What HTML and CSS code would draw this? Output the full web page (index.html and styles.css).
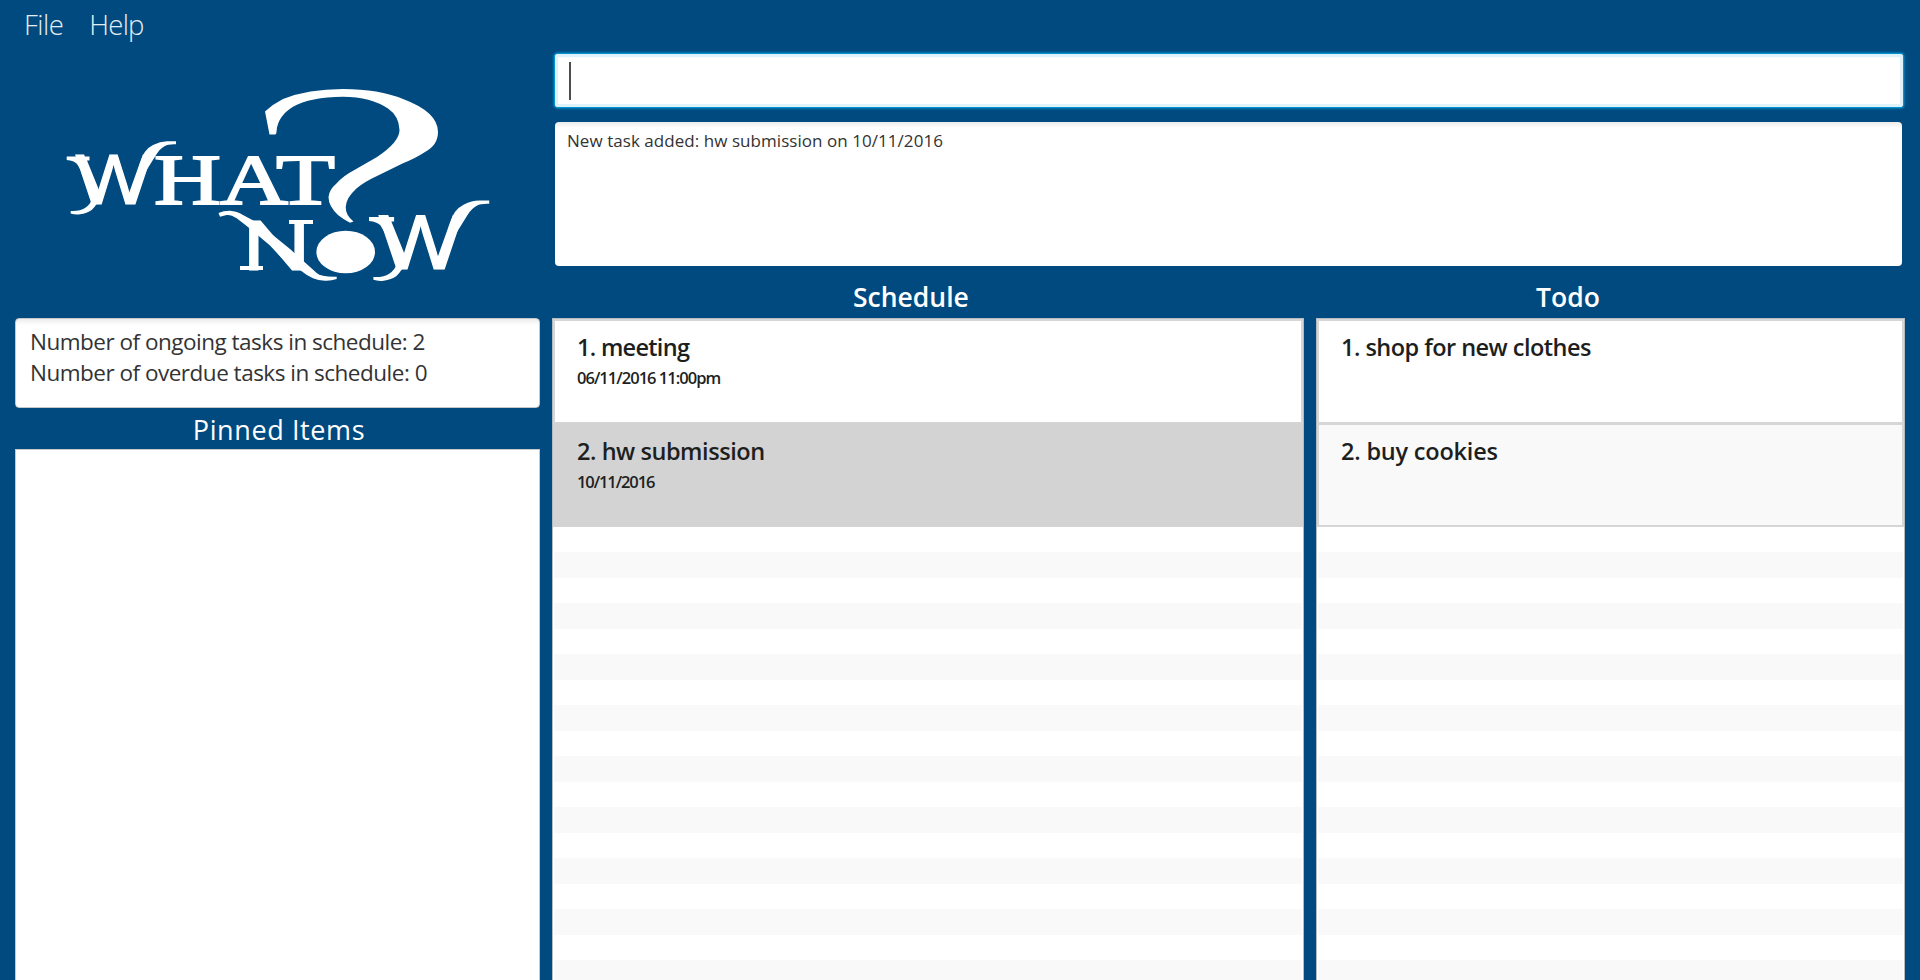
FILE: index.html
```html
<!DOCTYPE html>
<html lang="en">
<head>
<meta charset="utf-8">
<title>WhatNow</title>
<link rel="stylesheet" href="styles.css">
</head>
<body>
<nav class="menu"><span class="menu-file">File</span><span class="menu-help">Help</span></nav>
<main class="app">
  <aside class="side">
    <svg class="logo" viewBox="15 42 525 276" role="img" aria-label="What Now?">
      <defs>
        <g id="swash">
          <path d="M66.700 156.500H89.500V160.500H87L99 190L97 197L77 164Q74 160.500 66.700 160Z"/>
          <path d="M138 168Q142 156 145 151.700Q148 147.500 153 145Q160 141.300 167 141.300H176V144.300Q168 144 165 146Q160 148.500 156 155L146.700 170L133 204L128 196Z"/>
          <path d="M92.700 198Q90 205 85 208Q80 211.500 70.700 211V213.500Q75 215 80 214.300Q87 213.500 91.700 210Q97 205 101 196Z"/>
        </g>
      </defs>
      <g class="logo-ink">
        <use href="#swash"/>
        <text class="logo-sans" x="75.500" y="204" textLength="76" lengthAdjust="spacingAndGlyphs">W</text>
        <text class="logo-serif" x="154" y="203.500" textLength="67" lengthAdjust="spacingAndGlyphs">H</text>
        <text class="logo-serif" x="220" y="203.500" textLength="68" lengthAdjust="spacingAndGlyphs">A</text>
        <text class="logo-serif" x="276" y="203.500" textLength="59" lengthAdjust="spacingAndGlyphs">T</text>
        <text class="logo-sans" x="242" y="269.500" textLength="69" lengthAdjust="spacingAndGlyphs">N</text>
        <path d="M240 266H263V270H240ZM289 220H313V224H289Z"/>
        <path d="M218.500 213Q224 210.500 230 210.700Q237 211 243 215L256.700 222.500L274 236L290 249L306.700 264L316.700 273Q321 277 336.700 276.700V279Q331 281 325 280.700Q318 280.500 313 278.300Q306 275 300 270H293L270 245.500L246.700 226L236.700 218.300Q231 214.500 226.700 215L220 216.700Z"/>
        <g transform="translate(369 216) scale(1.1) translate(-66.700 -155.500)">
          <use href="#swash"/>
          <text class="logo-sans" x="75.500" y="204" textLength="76" lengthAdjust="spacingAndGlyphs">W</text>
        </g>
        <ellipse cx="345.700" cy="252" rx="29.300" ry="21.300"/>
        <path d="M265 111.500Q273 104 283 99Q308 89 343 89Q379 89 403 99Q438 112 438 132Q438 145 425 152Q416 158 403 163.300L377 176Q364 182 356.700 188.300Q346 198 345.700 207Q345.500 215 353.500 221.500L350 222.700Q344 220 338 215Q328.500 206 328.500 197Q329 190 336.700 183.300Q343 176 353.500 170.500L377 157Q399.500 142 399.500 130Q399 116 388 108.500Q371 97 343 96.700Q310 97 293 106.700Q278 116 276.700 130Q276.500 134.500 275 134.500H269.500Z"/>
      </g>
    </svg>
    <section class="field stats"><div><span class="t-ongoing">Number of ongoing tasks in schedule: 2</span></div><div><span class="t-overdue">Number of overdue tasks in schedule: 0</span></div></section>
    <h2 class="pinned-title"><span>Pinned Items</span></h2>
    <section class="pinned"></section>
  </aside>
  <div class="content">
    <div class="command"><i class="caret"></i></div>
    <section class="field result"><span class="t-result">New task added: hw submission on 10/11/2016</span></section>
    <div class="lists">
      <section class="column schedule">
        <h2><span>Schedule</span></h2>
        <div class="list">
          <article class="cell"><h3><span class="t-meeting">1. meeting</span></h3><p><span class="t-date1">06/11/2016 11:00pm</span></p></article>
          <article class="cell selected"><h3><span class="t-hw">2. hw submission</span></h3><p><span class="t-date2">10/11/2016</span></p></article>
          <div class="stripes"></div>
        </div>
      </section>
      <section class="column todo">
        <h2><span>Todo</span></h2>
        <div class="list">
          <article class="cell"><h3><span class="t-shop">1. shop for new clothes</span></h3></article>
          <article class="cell odd"><h3><span class="t-buy">2. buy cookies</span></h3></article>
          <div class="stripes"></div>
        </div>
      </section>
    </div>
  </div>
</main>
</body>
</html>
```
FILE: styles.css
```css
* { box-sizing: border-box; }
body {
  margin: 0;
  height: 980px;
  overflow: hidden;
  display: flex;
  flex-direction: column;
  background: #004a7f;
  color: #333;
  font-family: "Open Sans", "Noto Sans", sans-serif;
}
h2, h3, p { margin: 0; }
span { white-space: nowrap; }

.menu {
  height: 42px;
  flex: none;
  display: flex;
  gap: 26px;
  padding-left: 24px;
  color: #e6edf2;
  font-size: 27.5px;
  font-weight: 300;
  line-height: 50px;
}
.menu-file { letter-spacing: -0.5px; }
.menu-help { letter-spacing: -0.8px; }

.app { flex: 1; min-height: 0; display: flex; gap: 12px; padding: 0 15px; }
.side { width: 525px; display: flex; flex-direction: column; }
.logo { width: 525px; height: 276px; flex: none; }
.logo-ink { fill: #fff; }
.logo-sans { font: 70px "Liberation Sans", sans-serif; stroke: #fff; stroke-width: 1; }
.logo-serif { font: 72px "Liberation Serif", serif; stroke: #fff; stroke-width: 1.8; }

.field {
  border-radius: 4px;
  background: linear-gradient(#ececec, #fff 6px);
}
.stats {
  height: 90px;
  flex: none;
  border: 1px solid #c4c8cb;
  padding: 7px 14px;
  font-size: 22.5px;
  line-height: 31px;
  letter-spacing: -0.5px;
}
.pinned-title {
  height: 41px;
  flex: none;
  padding-left: 3px;
  text-align: center;
  color: #fff;
  font-size: 27px;
  font-weight: 400;
  line-height: 43px;
  letter-spacing: 0.6px;
}
.pinned { flex: 1; border: 1px solid #c8c8c8; border-bottom: 0; background: #fff; }

.content { flex: 1; min-width: 0; display: flex; flex-direction: column; }
.command {
  height: 53px;
  flex: none;
  margin: 12px 2px 15px 3px;
  padding: 8px 14px;
  border-radius: 3px;
  background: linear-gradient(#f4f4f4, #fff 5px);
  box-shadow: 0 0 0 1px #0093d0, 0 0 2px 2px #0093d0aa, inset 0 0 0 3px #dff1f9;
}
.caret { display: block; width: 2px; height: 38px; background: #4d4d4d; }
.result {
  height: 144px;
  flex: none;
  margin: 0 3px;
  padding: 7px 12px;
  font-size: 17px;
  line-height: 24px;
  letter-spacing: 0.05px;
}

.lists { flex: 1; min-height: 0; display: flex; gap: 12px; }
.column { display: flex; flex-direction: column; }
.schedule { width: 752px; }
.todo { flex: 1; }
.column h2 {
  height: 52px;
  flex: none;
  color: #fff;
  font-size: 26.5px;
  font-weight: 600;
  line-height: 63px;
  padding-left: 301px;
}
.todo h2 { padding-left: 220px; }
.list {
  flex: 1;
  min-height: 0;
  display: flex;
  flex-direction: column;
  border: 1px solid #b4bcc2;
  border-bottom: 0;
  background: #fff;
}
.cell {
  height: 104px;
  flex: none;
  border: 2px solid #d6d6d6;
  border-bottom-width: 1px;
  background: #fff;
  padding: 8px 22px;
  color: #1d1f1f;
}
.cell.odd { background: #f9f9f9; border-bottom-width: 2px; }
.cell.selected { background: #d3d3d3; border-color: #d3d3d3; }
.cell h3 { font-size: 23.5px; font-weight: 600; line-height: 36px; }
.cell p { font-size: 16.5px; font-weight: 600; line-height: 25px; }
.t-meeting { letter-spacing: -0.7px; }
.t-hw { letter-spacing: -0.45px; }
.t-shop { letter-spacing: -0.53px; }
.t-buy { letter-spacing: -0.2px; }
.t-date1 { letter-spacing: -0.98px; }
.t-date2 { letter-spacing: -1.1px; }
.stripes {
  flex: 1;
  margin: 0 1px;
  background: repeating-linear-gradient(#fff 0 25.5px, #f9f9f9 25.5px 51px);
}
```
